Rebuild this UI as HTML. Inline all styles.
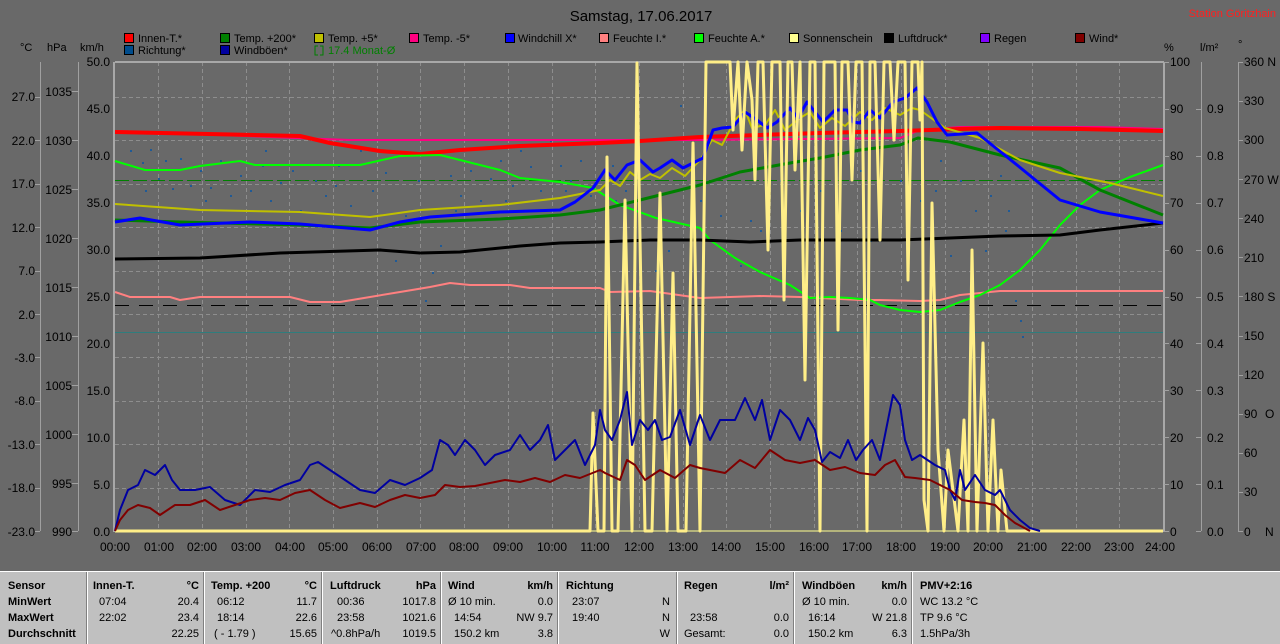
<!DOCTYPE html>
<html><head><meta charset="utf-8"><style>
html,body{margin:0;padding:0;background:#696969;}
svg{display:block;font-family:"Liberation Sans",sans-serif;}
</style></head><body>
<svg width="1280" height="644" viewBox="0 0 1280 644" xmlns="http://www.w3.org/2000/svg">
<rect width="1280" height="644" fill="#696969"/>
<text x="641" y="21" font-size="15" text-anchor="middle" fill="#000">Samstag, 17.06.2017</text>
<text x="1276" y="17" font-size="11" text-anchor="end" fill="#ff2020">Station Göritzhain</text>

<g font-size="11" fill="#000">
<text x="20" y="51">°C</text><text x="47" y="51">hPa</text><text x="80" y="51">km/h</text>
<text x="1164" y="51">%</text><text x="1200" y="51">l/m²</text><text x="1238" y="48">°</text>
</g>
<g font-size="11" fill="#000" stroke="#000" stroke-width="1">
<rect x="124.5" y="33.5" width="9" height="9" fill="#ff0000"/>
<rect x="220.5" y="33.5" width="9" height="9" fill="#008000"/>
<rect x="314.5" y="33.5" width="9" height="9" fill="#c0c000"/>
<rect x="409.5" y="33.5" width="9" height="9" fill="#ff0080"/>
<rect x="505.5" y="33.5" width="9" height="9" fill="#0000ff"/>
<rect x="599.5" y="33.5" width="9" height="9" fill="#ff8080"/>
<rect x="694.5" y="33.5" width="9" height="9" fill="#00ff00"/>
<rect x="789.5" y="33.5" width="9" height="9" fill="#ffff90"/>
<rect x="884.5" y="33.5" width="9" height="9" fill="#000000"/>
<rect x="980.5" y="33.5" width="9" height="9" fill="#8000ff"/>
<rect x="1075.5" y="33.5" width="9" height="9" fill="#800000"/>
<rect x="124.5" y="45.5" width="9" height="9" fill="#004c8c"/>
<rect x="220.5" y="45.5" width="9" height="9" fill="#0000a0"/>
</g>
<path d="M318 46h-3v9h3M320 46h3v9h-3" stroke="#008000" fill="none"/>
<g font-size="11" fill="#000">
<text x="138" y="42">Innen-T.*</text><text x="234" y="42">Temp. +200*</text><text x="328" y="42">Temp. +5*</text>
<text x="423" y="42">Temp. -5*</text><text x="518" y="42">Windchill X*</text><text x="613" y="42">Feuchte I.*</text>
<text x="708" y="42">Feuchte A.*</text><text x="803" y="42">Sonnenschein</text><text x="898" y="42">Luftdruck*</text>
<text x="994" y="42">Regen</text><text x="1089" y="42">Wind*</text>
<text x="138" y="54">Richtung*</text><text x="234" y="54">Windböen*</text>
<text x="328" y="54" fill="#008000">17.4 Monat-Ø</text>
</g>

<g stroke="#8e8e8e" stroke-width="1" stroke-dasharray="4,3">
<path d="M115 97.5H1163M115 140.5H1163M115 184.5H1163M115 227.5H1163M115 271.5H1163M115 314.5H1163M115 357.5H1163M115 401.5H1163M115 444.5H1163M115 488.5H1163"/>
<path d="M158.5 62V531M202.5 62V531M246.5 62V531M289.5 62V531M333.5 62V531M377.5 62V531M420.5 62V531M464.5 62V531M508.5 62V531M552.5 62V531M595.5 62V531M639.5 62V531M683.5 62V531M726.5 62V531M770.5 62V531M814.5 62V531M857.5 62V531M901.5 62V531M945.5 62V531M988.5 62V531M1032.5 62V531M1076.5 62V531M1119.5 62V531"/>
</g>
<g stroke="#a8a8a8" stroke-width="2" fill="none">
<path d="M115 62H1164M114 62V532M1164 62V532"/>
</g>
<g stroke="#a0a0a0" stroke-width="1" fill="none">
<path d="M40.5 62V531M78.5 62V531M1201.5 62V531M1238.5 62V531"/>
<path d="M35 97.5h5M35 140.5h5M35 184.5h5M35 227.5h5M35 271.5h5M35 314.5h5M35 357.5h5M35 401.5h5M35 444.5h5M35 488.5h5M35 531.5h5"/>
<path d="M72 91.5h6M72 140.5h6M72 189.5h6M72 238.5h6M72 287.5h6M72 336.5h6M72 385.5h6M72 434.5h6M72 483.5h6M72 531.5h6"/>
<path d="M1164 62.5h5M1164 109.5h5M1164 156.5h5M1164 203.5h5M1164 250.5h5M1164 297.5h5M1164 343.5h5M1164 390.5h5M1164 437.5h5M1164 484.5h5M1164 531.5h5"/>
<path d="M1196 109.5h5M1196 156.5h5M1196 203.5h5M1196 250.5h5M1196 297.5h5M1196 343.5h5M1196 390.5h5M1196 437.5h5M1196 484.5h5M1196 531.5h5"/>
<path d="M1238 62.5h5M1238 101.5h5M1238 140.5h5M1238 179.5h5M1238 218.5h5M1238 257.5h5M1238 296.5h5M1238 336.5h5M1238 375.5h5M1238 414.5h5M1238 453.5h5M1238 492.5h5M1238 531.5h5"/>
</g>
<g font-size="12" fill="#000" text-anchor="end">
<text x="35" y="101">27.0</text><text x="35" y="145">22.0</text><text x="35" y="188">17.0</text><text x="35" y="232">12.0</text><text x="35" y="275">7.0</text><text x="35" y="319">2.0</text><text x="35" y="362">-3.0</text><text x="35" y="405">-8.0</text><text x="35" y="449">-13.0</text><text x="35" y="492">-18.0</text><text x="35" y="536">-23.0</text>
<text x="72" y="96">1035</text><text x="72" y="145">1030</text><text x="72" y="194">1025</text><text x="72" y="243">1020</text><text x="72" y="292">1015</text><text x="72" y="341">1010</text><text x="72" y="390">1005</text><text x="72" y="439">1000</text><text x="72" y="488">995</text><text x="72" y="536">990</text>
<text x="110" y="66">50.0</text><text x="110" y="113">45.0</text><text x="110" y="160">40.0</text><text x="110" y="207">35.0</text><text x="110" y="254">30.0</text><text x="110" y="301">25.0</text><text x="110" y="348">20.0</text><text x="110" y="395">15.0</text><text x="110" y="442">10.0</text><text x="110" y="489">5.0</text><text x="110" y="536">0.0</text>
</g>
<g font-size="12" fill="#000">
<text x="1170" y="66">100</text><text x="1170" y="113">90</text><text x="1170" y="160">80</text><text x="1170" y="207">70</text><text x="1170" y="254">60</text><text x="1170" y="301">50</text><text x="1170" y="348">40</text><text x="1170" y="395">30</text><text x="1170" y="442">20</text><text x="1170" y="489">10</text><text x="1170" y="536">0</text>
<text x="1207" y="113">0.9</text><text x="1207" y="160">0.8</text><text x="1207" y="207">0.7</text><text x="1207" y="254">0.6</text><text x="1207" y="301">0.5</text><text x="1207" y="348">0.4</text><text x="1207" y="395">0.3</text><text x="1207" y="442">0.2</text><text x="1207" y="489">0.1</text><text x="1207" y="536">0.0</text>
<text x="1244" y="66">360 N</text><text x="1244" y="105">330</text><text x="1244" y="144">300</text><text x="1244" y="184">270 W</text><text x="1244" y="223">240</text><text x="1244" y="262">210</text><text x="1244" y="301">180 S</text><text x="1244" y="340">150</text><text x="1244" y="379">120</text><text x="1244" y="418">90</text><text x="1265" y="418">O</text><text x="1244" y="457">60</text><text x="1244" y="496">30</text><text x="1244" y="536">0</text><text x="1265" y="536">N</text>
</g>
<g font-size="12" fill="#000" text-anchor="middle">
<text x="115" y="551">00:00</text><text x="159" y="551">01:00</text><text x="202" y="551">02:00</text><text x="246" y="551">03:00</text><text x="290" y="551">04:00</text><text x="333" y="551">05:00</text><text x="377" y="551">06:00</text><text x="421" y="551">07:00</text><text x="464" y="551">08:00</text><text x="508" y="551">09:00</text><text x="552" y="551">10:00</text><text x="595" y="551">11:00</text><text x="639" y="551">12:00</text><text x="683" y="551">13:00</text><text x="726" y="551">14:00</text><text x="770" y="551">15:00</text><text x="814" y="551">16:00</text><text x="857" y="551">17:00</text><text x="901" y="551">18:00</text><text x="945" y="551">19:00</text><text x="988" y="551">20:00</text><text x="1032" y="551">21:00</text><text x="1076" y="551">22:00</text><text x="1119" y="551">23:00</text><text x="1160" y="551">24:00</text>
</g>

<path d="M115 180.5H1163" stroke="#008000" stroke-width="1" stroke-dasharray="14,4"/>
<path d="M115 305.5H1163" stroke="#000" stroke-width="1" stroke-dasharray="14,10"/>
<path d="M115 332.5H1163" stroke="#2f7d7d" stroke-width="1"/>
<path d="M115 531H1163" stroke="#ffff90" stroke-width="1"/>

<g fill="#1f5a96">
<rect x="130" y="150" width="2" height="2"/><rect x="142" y="162" width="2" height="2"/><rect x="150" y="149" width="2" height="2"/><rect x="158" y="178" width="2" height="2"/><rect x="165" y="160" width="2" height="2"/><rect x="172" y="188" width="2" height="2"/><rect x="180" y="158" width="2" height="2"/><rect x="190" y="185" width="2" height="2"/><rect x="200" y="170" width="2" height="2"/><rect x="210" y="187" width="2" height="2"/><rect x="220" y="160" width="2" height="2"/><rect x="230" y="195" width="2" height="2"/><rect x="240" y="175" width="2" height="2"/><rect x="250" y="190" width="2" height="2"/><rect x="262" y="165" width="2" height="2"/><rect x="270" y="200" width="2" height="2"/><rect x="280" y="182" width="2" height="2"/><rect x="292" y="170" width="2" height="2"/><rect x="300" y="210" width="2" height="2"/><rect x="315" y="180" width="2" height="2"/><rect x="325" y="195" width="2" height="2"/><rect x="338" y="165" width="2" height="2"/><rect x="350" y="205" width="2" height="2"/><rect x="360" y="150" width="2" height="2"/><rect x="372" y="190" width="2" height="2"/><rect x="385" y="172" width="2" height="2"/><rect x="395" y="260" width="2" height="2"/><rect x="405" y="215" width="2" height="2"/><rect x="418" y="180" width="2" height="2"/><rect x="425" y="300" width="2" height="2"/><rect x="432" y="272" width="2" height="2"/><rect x="440" y="245" width="2" height="2"/><rect x="450" y="175" width="2" height="2"/><rect x="460" y="195" width="2" height="2"/><rect x="470" y="170" width="2" height="2"/><rect x="480" y="200" width="2" height="2"/><rect x="490" y="178" width="2" height="2"/><rect x="500" y="160" width="2" height="2"/><rect x="512" y="185" width="2" height="2"/><rect x="520" y="150" width="2" height="2"/><rect x="530" y="166" width="2" height="2"/><rect x="540" y="190" width="2" height="2"/><rect x="550" y="140" width="2" height="2"/><rect x="560" y="165" width="2" height="2"/><rect x="570" y="180" width="2" height="2"/><rect x="580" y="160" width="2" height="2"/><rect x="590" y="195" width="2" height="2"/><rect x="600" y="140" width="2" height="2"/><rect x="612" y="165" width="2" height="2"/><rect x="625" y="190" width="2" height="2"/><rect x="640" y="240" width="2" height="2"/><rect x="655" y="270" width="2" height="2"/><rect x="668" y="250" width="2" height="2"/><rect x="680" y="105" width="2" height="2"/><rect x="700" y="200" width="2" height="2"/><rect x="720" y="215" width="2" height="2"/><rect x="740" y="265" width="2" height="2"/><rect x="760" y="230" width="2" height="2"/><rect x="780" y="180" width="2" height="2"/><rect x="800" y="210" width="2" height="2"/><rect x="820" y="190" width="2" height="2"/><rect x="840" y="230" width="2" height="2"/><rect x="860" y="170" width="2" height="2"/><rect x="880" y="200" width="2" height="2"/><rect x="900" y="180" width="2" height="2"/><rect x="920" y="200" width="2" height="2"/><rect x="940" y="160" width="2" height="2"/><rect x="960" y="180" width="2" height="2"/><rect x="975" y="210" width="2" height="2"/><rect x="990" y="195" width="2" height="2"/><rect x="1000" y="175" width="2" height="2"/><rect x="1008" y="210" width="2" height="2"/><rect x="1015" y="300" width="2" height="2"/><rect x="1020" y="320" width="2" height="2"/><rect x="1022" y="336" width="2" height="2"/><rect x="985" y="250" width="2" height="2"/><rect x="950" y="255" width="2" height="2"/>
<rect x="145" y="190" width="2" height="2"/><rect x="205" y="200" width="2" height="2"/><rect x="265" y="150" width="2" height="2"/><rect x="335" y="185" width="2" height="2"/><rect x="455" y="210" width="2" height="2"/><rect x="505" y="200" width="2" height="2"/><rect x="565" y="190" width="2" height="2"/><rect x="615" y="200" width="2" height="2"/><rect x="750" y="220" width="2" height="2"/><rect x="870" y="240" width="2" height="2"/><rect x="935" y="190" width="2" height="2"/><rect x="1005" y="230" width="2" height="2"/>
</g>

<g fill="none" stroke-linejoin="round">
<polyline stroke="#ff0080" stroke-width="2" points="115,131 350,140 600,140 700,140 800,139 900,138 920,130 960,127 1100,127 1163,129"/>
<polyline stroke="#ff0000" stroke-width="4" points="115,132 300,136 330,143 380,151 420,154 460,150 520,146 600,143 640,141 700,137 760,135 820,133 900,131 960,129 1000,128 1080,129 1163,131"/>
<polyline stroke="#ff8080" stroke-width="2" points="115,292 130,297 170,297 180,300 200,297 290,297 310,302 340,302 370,297 400,292 430,287 450,283 470,285 510,285 530,288 600,288 610,292 650,291 700,298 760,296 800,297 860,300 880,300 920,301 940,300 960,295 1000,291 1163,291"/>
<polyline stroke="#00ff00" stroke-width="2" points="115,161 145,170 180,170 200,166 240,161 255,165 360,165 400,156 440,155 480,165 500,170 520,178 560,182 593,188 620,205 656,218 700,228 710,240 735,258 760,272 790,285 810,298 830,297 850,298 870,300 880,305 900,310 920,312 940,310 960,302 980,295 1000,285 1020,270 1040,250 1060,225 1080,205 1100,190 1130,177 1163,165"/>
<polyline stroke="#000" stroke-width="3" points="115,259 200,258 280,253 380,250 420,253 460,252 520,246 560,243 600,242 650,240 700,240 750,242 800,240 900,240 1000,236 1060,235 1100,230 1163,223"/>
<polyline stroke="#008000" stroke-width="3" points="115,220 180,222 300,225 370,228 420,222 500,219 560,215 600,210 640,200 700,185 740,172 790,163 820,158 860,150 900,145 918,138 950,142 1000,155 1060,168 1100,190 1163,215"/>
<polyline stroke="#c0c000" stroke-width="2" points="115,204 200,210 300,212 370,217 420,210 500,205 560,198 600,190 610,180 620,186 630,172 640,180 650,174 660,178 672,168 685,176 700,160 712,140 722,145 735,120 745,110 752,128 765,125 775,110 785,130 800,118 810,112 820,128 832,118 845,126 860,112 872,120 885,108 900,115 912,108 920,110 945,128 980,138 1020,160 1060,173 1110,183 1163,196"/>
<polyline stroke="#0000ff" stroke-width="3" points="115,222 140,218 180,225 250,222 300,224 370,230 400,222 430,217 500,212 560,210 575,202 593,188 605,170 615,180 627,165 640,160 653,172 660,168 672,160 683,168 693,163 703,158 713,130 722,128 733,127 745,112 757,120 767,128 777,122 790,108 798,118 807,102 815,112 823,122 835,110 847,110 853,122 860,123 870,110 880,118 893,102 905,98 917,88 927,102 937,122 947,135 977,133 1017,165 1060,200 1100,212 1163,223"/>
<polyline stroke="#ffee88" stroke-width="3" points="115,531 590,531 593,413 598,531 604,531 607,157 612,531 618,531 625,200 632,531 637,63 645,531 652,531 660,193 667,531 673,273 678,531 686,531 693,143 700,531 706,62 730,62 733,130 738,62 742,150 747,62 752,100 755,180 758,62 763,62 768,250 772,62 780,62 784,300 788,62 792,62 795,170 800,62 805,380 810,62 815,62 820,531 824,62 835,62 838,330 842,62 848,62 852,180 856,62 862,62 867,531 870,62 875,62 880,240 884,62 890,62 894,140 898,62 905,62 908,280 912,62 918,62 920,120 922,62 924,500 928,531 932,203 938,450 944,531 948,450 958,531 964,420 968,531 972,250 977,531 983,343 988,531 993,420 998,531 1001,470 1007,531 1163,531"/>
<polyline stroke="#0000a0" stroke-width="2" points="115,531 120,510 128,490 138,485 145,470 155,475 165,465 172,480 180,490 195,490 210,487 225,500 240,505 255,490 270,492 285,485 300,480 310,465 318,462 330,470 345,480 360,490 375,493 390,480 405,485 420,478 432,470 440,440 448,445 455,455 465,440 475,450 485,465 495,455 510,450 520,435 530,450 540,440 548,425 555,460 565,450 575,440 585,465 595,445 600,410 605,430 612,440 620,420 627,392 632,445 640,420 648,430 655,420 662,440 670,437 680,410 690,445 700,415 710,440 720,420 735,420 745,398 755,420 762,400 770,440 780,410 790,420 800,440 808,418 815,430 822,462 830,452 840,458 848,440 856,460 863,450 872,440 880,460 888,420 893,395 900,405 905,440 912,460 920,455 935,465 945,470 950,490 955,500 960,470 965,490 975,475 985,490 995,495 1000,490 1010,510 1020,520 1030,528 1040,531"/>
<polyline stroke="#800000" stroke-width="2" points="115,531 120,520 128,510 138,505 150,508 160,515 175,505 190,505 205,500 220,510 235,505 250,500 265,498 280,500 295,493 310,490 325,500 340,508 360,503 375,507 390,500 405,495 420,498 435,495 445,485 460,487 475,486 490,483 505,480 520,482 535,478 550,482 565,475 580,478 600,470 605,473 620,480 627,460 635,465 645,480 660,470 675,478 690,465 700,468 710,470 725,473 740,460 755,468 770,450 785,460 800,463 815,460 830,470 845,467 860,473 875,475 885,465 895,460 905,477 915,478 930,480 940,485 950,490 962,500 975,502 985,503 995,505 1005,515 1015,523 1030,531"/>
</g>

<rect x="0" y="571" width="1280" height="73" fill="#c0c0c0"/>
<path d="M0 571.5H1280" stroke="#fff"/>
<g stroke="#fff" stroke-width="1">
<path d="M87.5 571V644M204.5 571V644M322.5 571V644M441.5 571V644M558.5 571V644M677.5 571V644M794.5 571V644M912.5 571V644"/>
</g>
<g stroke="#808080" stroke-width="1">
<path d="M86.5 572V644M203.5 572V644M321.5 572V644M440.5 572V644M557.5 572V644M676.5 572V644M793.5 572V644M911.5 572V644"/>
</g>
<g font-size="11" fill="#000" font-weight="bold">
<text x="8" y="589">Sensor</text><text x="8" y="605">MinWert</text><text x="8" y="621">MaxWert</text><text x="8" y="637">Durchschnitt</text>
<text x="93" y="589">Innen-T.</text><text x="211" y="589">Temp. +200</text><text x="330" y="589">Luftdruck</text><text x="448" y="589">Wind</text><text x="566" y="589">Richtung</text><text x="684" y="589">Regen</text><text x="802" y="589">Windböen</text><text x="920" y="589">PMV+2:16</text>
</g>
<g font-size="11" fill="#000" font-weight="bold" text-anchor="end">
<text x="199" y="589">°C</text><text x="317" y="589">°C</text><text x="436" y="589">hPa</text><text x="553" y="589">km/h</text><text x="789" y="589">l/m²</text><text x="907" y="589">km/h</text>
</g>
<g font-size="11" fill="#000">
<text x="99" y="605">07:04</text><text x="99" y="621">22:02</text>
<text x="217" y="605">06:12</text><text x="217" y="621">18:14</text><text x="214" y="637">( - 1.79 )</text>
<text x="337" y="605">00:36</text><text x="337" y="621">23:58</text><text x="331" y="637">^0.8hPa/h</text>
<text x="448" y="605">Ø 10 min.</text><text x="454" y="621">14:54</text><text x="454" y="637">150.2 km</text>
<text x="572" y="605">23:07</text><text x="572" y="621">19:40</text>
<text x="690" y="621">23:58</text><text x="684" y="637">Gesamt:</text>
<text x="802" y="605">Ø 10 min.</text><text x="808" y="621">16:14</text><text x="808" y="637">150.2 km</text>
<text x="920" y="605">WC 13.2 °C</text><text x="920" y="621">TP 9.6 °C</text><text x="920" y="637">1.5hPa/3h</text>
</g>
<g font-size="11" fill="#000" text-anchor="end">
<text x="199" y="605">20.4</text><text x="199" y="621">23.4</text><text x="199" y="637">22.25</text>
<text x="317" y="605">11.7</text><text x="317" y="621">22.6</text><text x="317" y="637">15.65</text>
<text x="436" y="605">1017.8</text><text x="436" y="621">1021.6</text><text x="436" y="637">1019.5</text>
<text x="553" y="605">0.0</text><text x="553" y="621">NW 9.7</text><text x="553" y="637">3.8</text>
<text x="670" y="605">N</text><text x="670" y="621">N</text><text x="670" y="637">W</text>
<text x="789" y="621">0.0</text><text x="789" y="637">0.0</text>
<text x="907" y="605">0.0</text><text x="907" y="621">W 21.8</text><text x="907" y="637">6.3</text>
</g>
</svg>
</body></html>
